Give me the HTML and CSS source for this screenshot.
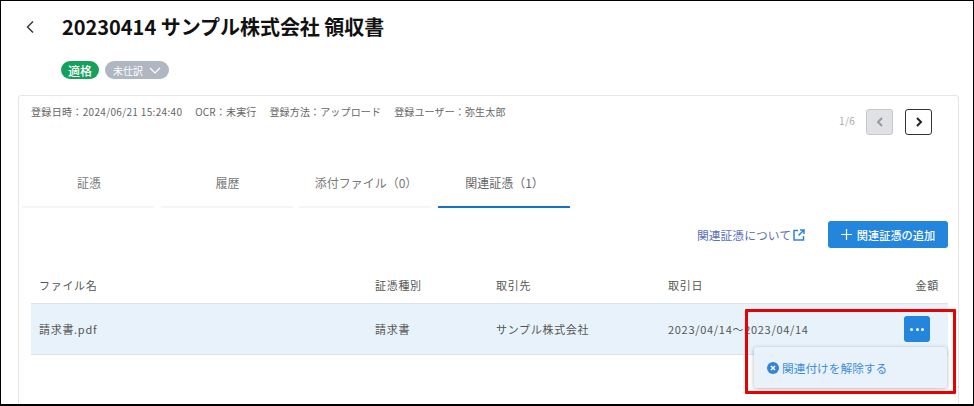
FILE: index.html
```html
<!DOCTYPE html>
<html lang="ja">
<head>
<meta charset="utf-8">
<title>領収書</title>
<link rel="stylesheet" href="styles.css">
</head>
<body>
<div class="frame">
  <header class="head">
    <svg class="back" width="10" height="14" viewBox="0 0 10 14"><path d="M8 1.5 2.5 7 8 12.5" fill="none" stroke="#333" stroke-width="1.4"/></svg>
    <h1 class="title">20230414 サンプル株式会社 領収書</h1>
  </header>
  <div class="badges">
    <span class="badge badge-green">適格</span>
    <span class="badge badge-gray">未仕訳<svg width="12" height="7" viewBox="0 0 12 7"><path d="M1 1l5 5 5-5" fill="none" stroke="#fff" stroke-width="1.2"/></svg></span>
  </div>
  <section class="card">
    <div class="meta">
      <div class="meta-items">
        <span class="meta-date">登録日時：2024/06/21 15:24:40</span>
        <span>OCR：未実行</span>
        <span>登録方法：アップロード</span>
        <span>登録ユーザー：弥生太郎</span>
      </div>
      <div class="pager">
        <span class="count">1/6</span>
        <span class="page-btn page-prev"><svg width="10" height="12" viewBox="0 0 10 12"><path d="M7 2 3 6l4 4" fill="none" stroke="#999" stroke-width="2"/></svg></span>
        <span class="page-btn page-next"><svg width="10" height="12" viewBox="0 0 10 12"><path d="M3 2l4 4-4 4" fill="none" stroke="#222" stroke-width="2"/></svg></span>
      </div>
    </div>
    <nav class="tabs">
      <span class="tab">証憑</span>
      <span class="tab">履歴</span>
      <span class="tab">添付ファイル（0）</span>
      <span class="tab tab-active">関連証憑（1）</span>
    </nav>
    <div class="actions">
      <a class="link">関連証憑について<svg width="12" height="12" viewBox="0 0 12 12"><path d="M5 1.500H1v9.500h9.500V7M7 1h4v4M11 1 5.500 6.500" fill="none" stroke="#2f86d8" stroke-width="1.500"/></svg></a>
      <span class="add-btn"><svg width="11" height="11" viewBox="0 0 11 11"><path d="M5.500 0v11M0 5.500h11" stroke="#fff" stroke-width="1.200"/></svg>関連証憑の追加</span>
    </div>
    <div class="table">
      <div class="row row-head">
        <span>ファイル名</span><span>証憑種別</span><span>取引先</span><span>取引日</span><span class="amount">金額</span>
      </div>
      <div class="row row-body">
        <span>請求書.pdf</span><span>請求書</span><span>サンプル株式会社</span><span>2023/04/14～2023/04/14</span>
        <span class="amount"><span class="more"><i></i><i></i><i></i></span></span>
      </div>
    </div>
    <div class="popup">
      <svg width="12" height="12" viewBox="0 0 12 12"><circle cx="6" cy="6" r="6" fill="#2f86d8"/><path d="M4 4l4 4M8 4l-4 4" stroke="#fff" stroke-width="1.500"/></svg>関連付けを解除する
    </div>
  </section>
  <div class="highlight"></div>
</div>
</body>
</html>
```
FILE: styles.css
```css
* { box-sizing: border-box; }
html, body { margin: 0; padding: 0; background: #fff; }
body { font-family: "Noto Sans CJK JP", "Noto Sans", sans-serif; color: #555; }
.frame {
  position: relative;
  width: 974px;
  height: 406px;
  border: 1px solid #000;
  border-bottom-width: 2px;
  overflow: hidden;
  padding: 0 14px 0 17px;
}
.head { display: flex; align-items: center; height: 52px; padding-left: 7px; }
.back { flex: none; margin-right: 27px; }
.title { margin: 0; font-size: 20px; line-height: 28px; font-weight: 700; color: #111; letter-spacing: -0.03px; }
.badges { display: flex; gap: 6px; height: 18px; margin: 8px 0 16px 43px; }
.badge {
  display: inline-flex;
  align-items: center;
  height: 18px;
  border-radius: 9px;
  font-size: 11px;
  color: #fff;
}
.badge-green { background: #15a05c; padding: 0 7px; font-weight: 500; font-size: 12px; }
.badge-gray { background: #b0b6c2; padding: 0 8px; font-size: 10px; gap: 6px; }
.card {
  position: relative;
  height: 320px;
  border: 1px solid #e6e6e6;
  border-radius: 3px;
  padding: 0 10px 0 12px;
}
.meta { display: flex; justify-content: space-between; height: 66px; }
.meta-items { display: flex; gap: 13px; font-size: 10px; line-height: 14px; padding-top: 9px; color: #666; letter-spacing: .15px; }
.meta-date { letter-spacing: .33px; }
.pager { display: flex; align-items: flex-start; padding: 13px 16px 0 0; }
.count { font-size: 10px; line-height: 14px; color: #aaa; margin: 5px 11px 0 0; letter-spacing: .3px; }
.page-btn {
  display: flex;
  align-items: center;
  justify-content: center;
  width: 27px;
  height: 26px;
  border-radius: 3px;
}
.page-prev { background: #dfe1e4; border: 1px solid #c4c7cb; margin-right: 12px; }
.page-next { border: 1px solid #333; }
.tabs { display: flex; gap: 6.500px; height: 46px; margin-left: -9px; }
.tab {
  width: 132px;
  font-size: 12px;
  line-height: 18px;
  padding: 12px 0 0 2px;
  text-align: center;
  border-bottom: 2px solid #f5f5f5;
  color: #777;
}
.tab-active { border-bottom-color: #1273c9; color: #666; }
.actions { display: flex; justify-content: flex-end; align-items: center; gap: 23px; height: 27px; margin-top: 13px; }
.link { display: flex; align-items: center; gap: 2px; font-size: 11.800px; color: #5a70b8; margin-right: 1px; }
.add-btn {
  display: flex;
  align-items: center;
  justify-content: center;
  gap: 5px;
  width: 120px;
  height: 27px;
  margin-left: -1px;
  background: #2485dc;
  border-radius: 3px;
  color: #fff;
  font-size: 11.200px;
  font-weight: 500;
}
.table { margin-top: 18px; }
.row {
  display: grid;
  grid-template-columns: 336px 121px 172px 1fr 59px;
  align-items: center;
  font-size: 11px;
  letter-spacing: .7px;
  padding: 0 9px 0 8px;
  color: #555;
}
.row-head { height: 37px; }
.row-body { height: 52px; background: #e8f2fb; border-top: 1px solid #dbe3ea; border-bottom: 1px solid #dbe3ea; }
.row-body .amount { margin-right: 1px; }
.amount { display: flex; justify-content: flex-end; }
.more {
  display: flex;
  align-items: center;
  justify-content: center;
  gap: 2.500px;
  width: 26px;
  height: 26px;
  margin-right: 8px;
  background: #2485dc;
  border-radius: 3px;
}
.more i { width: 3px; height: 3px; border-radius: 50%; background: #fff; }
.popup {
  position: absolute;
  left: 735px;
  top: 251px;
  width: 193px;
  height: 41px;
  display: flex;
  align-items: center;
  gap: 3px;
  padding-left: 13px;
  background: #e9f2fb;
  border-radius: 3px;
  box-shadow: 0 1px 4px rgba(0, 0, 0, .3);
  color: #3f8fdb;
  font-size: 11.700px;
}
.highlight {
  position: absolute;
  left: 744px;
  top: 308px;
  width: 211px;
  height: 85px;
  border: 3px solid #ea0000;
  border-radius: 1px;
}
```
